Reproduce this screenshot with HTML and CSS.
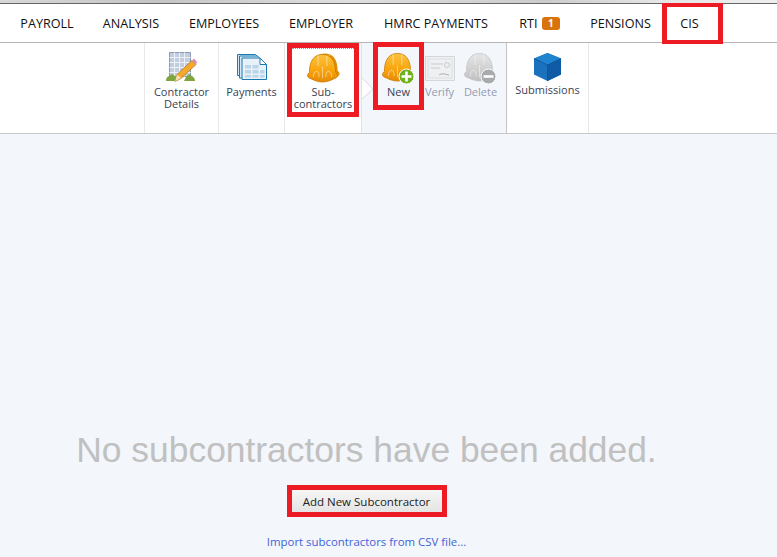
FILE: index.html
```html
<!DOCTYPE html>
<html lang="en">
  <head>
    <meta charset="UTF-8" />
    <meta name="viewport" content="width=device-width, initial-scale=1.0" />
    <title>CIS Subcontractors</title>
    <link rel="stylesheet" href="styles.css">
  </head>
  <body>
    <svg class="defs" width="0" height="0">
      <defs>
        <linearGradient id="hat" x1="0" y1="0" x2="0" y2="1">
          <stop offset="0" stop-color="#fdc23f" />
          <stop offset="0.55" stop-color="#f9a60e" />
          <stop offset="1" stop-color="#e68a02" />
        </linearGradient>
        <linearGradient id="hat-off" x1="0" y1="0" x2="0" y2="1">
          <stop offset="0" stop-color="#e6e6e6" />
          <stop offset="1" stop-color="#c0c0c0" />
        </linearGradient>
        <symbol id="helmet" viewBox="0 0 32 32">
          <path d="M2.500 20C2.500 7 8 1.500 16 1.500S29.500 7 29.500 20c1.500 1 2 2.500 2 3.500 0 1.500-1.500 2.500-3.500 3-3 1.500-7.500 3.500-12 3.500s-9-2-12-3.500c-2-.5-3.500-1.500-3.500-3 0-1 .5-2.500 2-3.500z" />
          <path d="M11.500 2.500v11M20.500 2.500v11" fill="none" stroke="#fff" stroke-opacity=".4" stroke-width="1.200" />
          <path d="M6.500 25c0-4 1.500-6 3.500-6s2.500 2 2.500 6M19.500 25c0-4 .5-6 2.500-6s3.500 2 3.500 6M16 14v12" fill="none" stroke="#fff" stroke-opacity=".6" />
        </symbol>
      </defs>
    </svg>

    <div class="strip"></div>
    <nav class="tabs">
      <a class="tab tab-payroll">PAYROLL</a>
      <a class="tab tab-analysis">ANALYSIS</a>
      <a class="tab tab-employees">EMPLOYEES</a>
      <a class="tab tab-employer">EMPLOYER</a>
      <a class="tab tab-hmrc">HMRC PAYMENTS</a>
      <a class="tab tab-rti">RTI <span class="badge">1</span></a>
      <a class="tab tab-pensions">PENSIONS</a>
      <a class="tab tab-marked">CIS</a>
    </nav>

    <div class="ribbon">
      <div class="tool tool-details">
        <svg class="icon" width="31" height="30" viewBox="0 0 31 30">
          <path d="M3.500 .5h21v24h-21z" fill="#c3cde0" stroke="#8b9ab2" />
          <path d="M3.500 5.500h21M3.500 10.500h21M3.500 15.500h21M3.500 20.500h21M8.500 .5v24M13.500 .5v24M18.500 .5v24" stroke="#eef2f8" />
          <path d="M0 29c0-3 1-4 3-5l3-2 3 2 3 5zM18 29l2-4 3-3 3 2c2 1 3 3 3 5z" fill="#7fa53e" />
          <path d="M9 29.500l2-7 15-14 4 4-15 14z" fill="#f4a92a" stroke="#a9701c" stroke-width=".7" />
          <path d="M26 8.500l2-2 3 3.500-1 2.500z" fill="#d889c0" />
          <path d="M9 29.500l2-7 4 3.500z" fill="#f6dfb4" />
        </svg>
        <span>Contractor<br>Details</span>
      </div>
      <div class="tool tool-payments">
        <svg class="icon" width="30" height="26" viewBox="0 0 30 26">
          <path d="M.5 .5h18l3 3v18H.5z" fill="#d7e9f6" stroke="#1a7ab5" />
          <path d="M2.500 2h18l3 3v19h-21z" fill="#d7e9f6" stroke="#1a7ab5" />
          <path d="M5 4h18l6.500 6.500v15H5z" fill="#e6f1f9" stroke="#1a7ab5" />
          <path d="M23 4v6.500h6.500z" fill="#fff" stroke="#1a7ab5" />
          <path d="M8 11h6v3.500H8zM15.500 11h6v3.500h-6zM8 16h6v3.500H8zM15.500 16h6v3.500h-6zM23 16h4.500v3.500H23zM8 21h6v2.500H8zM15.500 21h6v2.500h-6zM23 21h4.500v2.500H23z" fill="#bcd6e8" />
        </svg>
        <span>Payments</span>
      </div>
      <div class="tool tool-sub">
        <div class="marked marked-sub">
          <svg class="icon" width="33" height="33" viewBox="0 0 33 33">
            <use href="#helmet" x="3" y="0" width="30" height="30" fill="#e08e08" />
            <use href="#helmet" x="0" y="1" width="31" height="31" fill="url(#hat)" stroke="#c97a06" stroke-width=".8" />
          </svg>
          <span>Sub-<br>contractors</span>
        </div>
      </div>
      <div class="panel">
        <svg class="chevron" width="12" height="21" viewBox="0 0 12 21">
          <path d="M0 0l11 11L0 21z" fill="#fff" />
          <path d="M0 0l11 11L0 21" fill="none" stroke="#d6d9de" />
        </svg>
        <div class="tool tool-new marked">
          <svg class="icon" width="33" height="33" viewBox="0 0 33 33">
            <use href="#helmet" x="0" y="0" width="31" height="31" fill="url(#hat)" stroke="#c97a06" stroke-width=".8" />
            <circle cx="24.500" cy="24.500" r="7.500" fill="#6fb01c" stroke="#fff" />
            <path d="M24.500 19.500v10M19.500 24.500h10" stroke="#fff" stroke-width="2.600" />
          </svg>
          <span>New</span>
        </div>
        <div class="tool tool-verify off">
          <svg class="icon" width="30" height="25" viewBox="0 0 30 25">
            <path d="M.5 .5h29v24H.5z" fill="#eef0f2" stroke="#d4d7da" />
            <path d="M3 3h24v19H3z" fill="none" stroke="#dcdfe2" />
            <path d="M6 8h12M6 12h9" stroke="#c8ccd0" />
            <circle cx="22" cy="9" r="2.500" fill="none" stroke="#c8ccd0" />
            <path d="M14 19c3-2 5-1 10 0" fill="none" stroke="#a8acb0" />
          </svg>
          <span>Verify</span>
        </div>
        <div class="tool tool-delete off">
          <svg class="icon" width="33" height="33" viewBox="0 0 33 33">
            <use href="#helmet" x="0" y="0" width="31" height="31" fill="url(#hat-off)" stroke="#c4c4c4" stroke-width=".8" />
            <circle cx="24.500" cy="24.500" r="7.500" fill="#a8abae" stroke="#fff" />
            <path d="M19.500 24.500h10" stroke="#fff" stroke-width="2.600" />
          </svg>
          <span>Delete</span>
        </div>
      </div>
      <div class="tool tool-submissions">
        <svg class="icon" width="27" height="28" viewBox="0 0 27 28">
          <path d="M13.500 0L27 5.500v16L13.500 28 0 21.500v-16z" fill="#1a72bf" />
          <path d="M13.500 12L27 5.500v16L13.500 28z" fill="#0f5ba6" />
          <path d="M13.500 0L27 5.500 13.500 12 0 5.500z" fill="#2083cf" />
          <path d="M13.500 12v16M0 5.500L13.500 12 27 5.500" fill="none" stroke="#0a4f93" stroke-opacity=".7" />
        </svg>
        <span>Submissions</span>
      </div>
    </div>

    <main class="empty">
      <p class="empty-title">No subcontractors have been added.</p>
      <div class="add-frame"><button class="add-btn">Add New Subcontractor</button></div>
      <a class="import-link">Import subcontractors from CSV file...</a>
    </main>
  </body>
</html>
```

FILE: styles.css
```css
html,
body {
  height: 100%;
}

body {
  font-family: "Open Sans", "Noto Sans", sans-serif;
  font-size: 11px;
  background-color: #f3f6fb;
  color: #333;
  margin: 0;
  display: flex;
  flex-direction: column;
  overflow: hidden;
}

.defs {
  position: absolute;
}

.strip {
  flex: none;
  height: 3px;
  background: linear-gradient(90deg, #d8d8d8, #c4c4c4 20%, #e0e0e0 45%, #cbcbcb 70%, #e6e6e6 85%, #eee);
}

/* top tabs */
.tabs {
  flex: none;
  display: flex;
  align-items: center;
  height: 38px;
  padding-left: 6px;
  background-color: #fff;
  border-top: 1px solid #666;
  border-bottom: 1px solid #b5b5b5;
  font-size: 12.6px;
  color: #111;
}

.tab {
  box-sizing: border-box;
  text-align: center;
  white-space: nowrap;
}

.tab-payroll {
  width: 82px;
}

.tab-analysis {
  width: 86px;
}

.tab-employees {
  width: 100px;
}

.tab-employer {
  width: 94px;
}

.tab-hmrc {
  width: 136px;
}

.tab-rti {
  width: 71px;
}

.tab-pensions {
  width: 91px;
}

.tab-marked {
  position: relative;
  width: 61px;
  height: 41px;
  line-height: 33px;
  margin-left: -4px;
  padding-right: 6px;
  border: 5px solid #ed1c24;
  border-width: 4px 5px;
}

.badge {
  display: inline-block;
  width: 18px;
  height: 13px;
  line-height: 13px;
  margin-left: 1px;
  border-radius: 3px;
  background-color: #d9730d;
  color: #fff;
  font-size: 10px;
  font-weight: bold;
  text-align: center;
  vertical-align: 1px;
}

/* ribbon */
.ribbon {
  flex: none;
  display: flex;
  height: 90px;
  padding-left: 144px;
  background-color: #fff;
  border-bottom: 1px solid #c8c8c8;
}

.tool {
  display: flex;
  flex-direction: column;
  align-items: center;
  box-sizing: border-box;
  line-height: 12px;
  text-align: center;
  color: #3b4252;
}

.tool span {
  display: block;
}

.tool-details,
.tool-payments,
.tool-sub {
  border-left: 1px solid #e8e8e8;
}

.tool-details {
  width: 74px;
  padding-top: 9px;
}

.tool-details .icon {
  margin-bottom: 4px;
}

.tool-payments {
  width: 66px;
  padding-top: 11px;
}

.tool-payments .icon {
  margin-bottom: 6px;
}

.tool-sub {
  width: 77px;
  padding-left: 2px;
  align-items: flex-start;
}

.marked {
  box-sizing: border-box;
  border: 5px solid #ed1c24;
}

.marked-sub {
  width: 72px;
  height: 74px;
  display: flex;
  flex-direction: column;
  align-items: center;
}

.marked-sub::before {
  content: "";
  align-self: stretch;
  height: 0;
  border-top: 1px dotted #999;
}

.marked-sub .icon {
  margin-top: 3px;
  margin-bottom: 1px;
}

.panel {
  position: relative;
  flex: none;
  display: flex;
  width: 146px;
  box-sizing: border-box;
  padding-left: 11px;
  background-color: #f3f6fb;
  border-right: 1px solid #c4c4c4;
  border-left: 1px solid #dfe2e6;
}

.chevron {
  position: absolute;
  left: 0;
  top: 35px;
}

.tool-new {
  position: relative;
  width: 51px;
  height: 68px;
  margin-top: -1px;
  padding-top: 5px;
}

.tool-new .icon {
  margin-bottom: 1px;
}

.tool-verify {
  width: 31px;
  padding-top: 13px;
}

.tool-verify .icon {
  margin-bottom: 5px;
}

.tool-delete {
  width: 51px;
  padding-top: 9px;
}

.tool-delete .icon {
  margin-bottom: 1px;
}

.off {
  color: #949bb4;
}

.tool-submissions {
  width: 82px;
  padding-top: 10px;
  border-right: 1px solid #e8e8e8;
}

.tool-submissions .icon {
  margin-bottom: 3px;
}

/* empty state */
.empty {
  flex: 1;
  display: flex;
  flex-direction: column;
  align-items: center;
  padding-right: 44px;
}

.empty-title {
  margin: 294px 0 0;
  font-family: "Liberation Sans", Arial, sans-serif;
  font-size: 35.4px;
  line-height: 44px;
  color: #c0c0c0;
}

.add-frame {
  margin-top: 13px;
  box-sizing: border-box;
  width: 160px;
  height: 32px;
  border: 5px solid #ed1c24;
}

.add-btn {
  display: block;
  width: 100%;
  height: 100%;
  padding: 0;
  border: 0;
  background: linear-gradient(#f6f6f6, #e4e4e4);
  font-family: inherit;
  font-size: 11.5px;
  color: #222;
}

.import-link {
  margin-top: 17px;
  font-size: 11.4px;
  color: #3e63d6;
}
```
